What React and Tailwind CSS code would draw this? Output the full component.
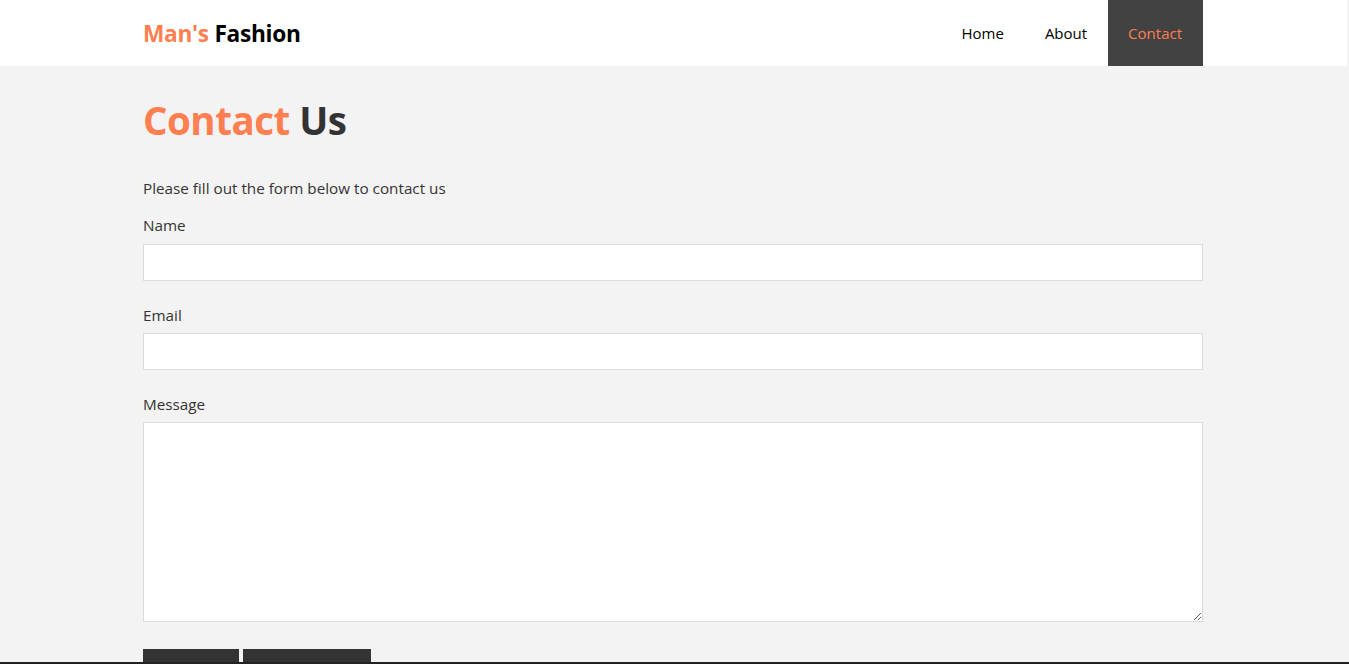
export default function App() {
  const font = { fontFamily: '"Open Sans", "Noto Sans", sans-serif' };
  return (
    <div className="bg-[#f3f3f3] min-h-screen text-[#333]" style={font}>
      <div className="w-[1347px]">
        <header className="bg-white h-[66px]">
          <div className="w-[1346px]">
            <div className="w-[1060px] mx-auto h-[66px] flex items-center justify-between">
              <div className="text-[22.7px] font-bold tracking-[-0.3px] pt-[2px]">
                <span className="text-[#ff7f50]">Man's</span> <span className="text-black">Fashion</span>
              </div>
              <nav className="flex h-[66px] text-[15px]">
                <a className="h-full flex items-center pl-[20px] pr-[21px] text-black">Home</a>
                <a className="h-full flex items-center pl-[20px] pr-[21px] text-black">About</a>
                <a className="h-full flex items-center pl-[20px] pr-[21px] bg-[#424242] text-[#ff7f50]">Contact</a>
              </nav>
            </div>
          </div>
        </header>
        <div className="w-[1346px]">
          <main className="w-[1060px] mx-auto">
            <h1 className="text-[38.5px] font-bold leading-none pt-[35px] tracking-[-0.5px]">
              <span className="text-[#ff7f50]">Contact</span> <span className="text-[#333]">Us</span>
            </h1>
            <p className="text-[15.25px] mt-[38px] leading-[20px]">Please fill out the form below to contact us</p>
            <form className="mt-[17px]">
              <label className="block text-[15.25px] leading-[20px]">Name</label>
              <input className="block w-full h-[37px] mt-[9px] bg-white border border-[#dcdcdc]" />
              <label className="block text-[15.25px] leading-[20px] mt-[24px]">Email</label>
              <input className="block w-full h-[37px] mt-[8px] bg-white border border-[#dcdcdc]" />
              <label className="block text-[15.25px] leading-[20px] mt-[24px]">Message</label>
              <textarea className="block w-full h-[200px] mt-[8px] bg-white border border-[#dcdcdc] resize-y" />
              <div className="flex gap-[4px] mt-[27px] h-[13px]">
                <button type="button" className="w-[96px] h-[40px] bg-[#333] text-white text-[14px] shrink-0">Submit</button>
                <button type="button" className="w-[128px] h-[40px] bg-[#333] text-white text-[14px] shrink-0">Reset Form</button>
              </div>
            </form>
          </main>
        </div>
      </div>
      <footer className="relative z-10 bg-[#222] h-[80px]"></footer>
    </div>
  );
}
